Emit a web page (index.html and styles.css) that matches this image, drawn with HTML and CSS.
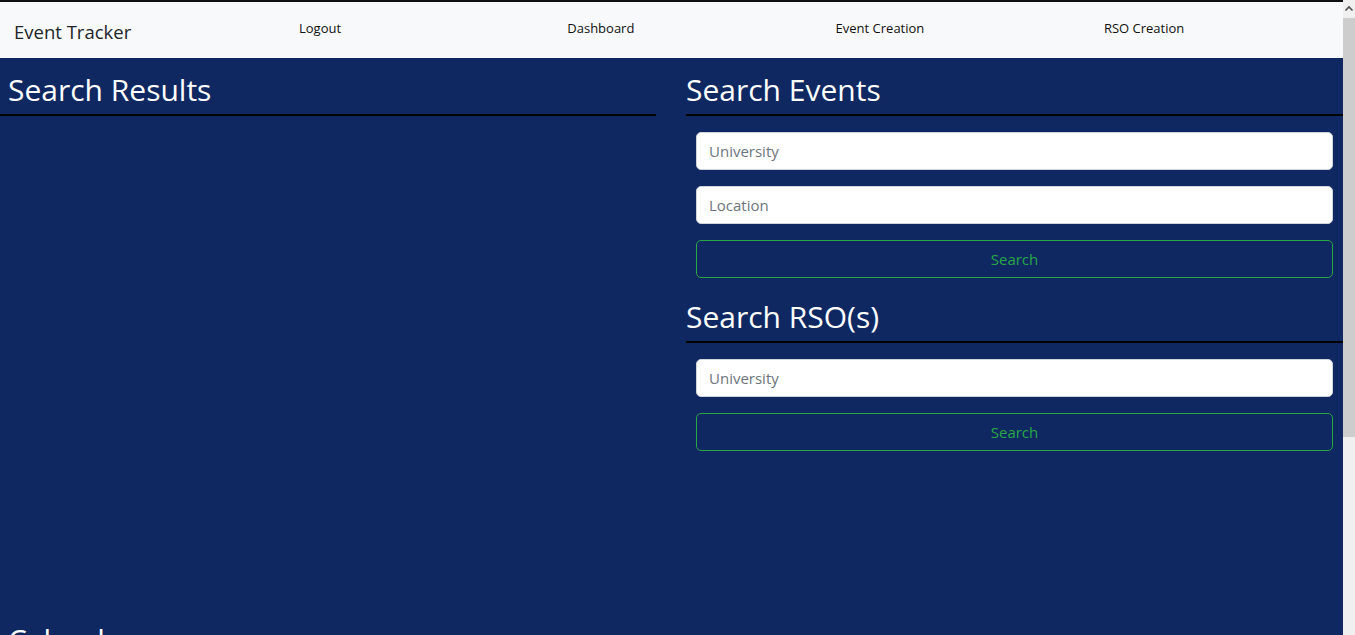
FILE: index.html
```html
<!DOCTYPE html>
<html lang="en">
<head>
<meta charset="utf-8">
<title>Event Tracker</title>
<link rel="stylesheet" href="styles.css">
</head>
<body>
<div class="viewport">
  <div class="page">
    <div class="topline"></div>
    <nav class="navbar">
      <span class="brand">Event Tracker</span>
      <ul class="nav-links">
        <li><a href="#">Logout</a></li>
        <li><a href="#">Dashboard</a></li>
        <li><a href="#">Event Creation</a></li>
        <li><a href="#">RSO Creation</a></li>
      </ul>
    </nav>
    <main class="main">
      <div class="columns">
        <section class="col-left">
          <h2 class="section-title title-left">Search Results</h2>
          <div class="results"></div>
        </section>
        <section class="col-right">
          <h2 class="section-title">Search Events</h2>
          <form class="search-form">
            <input class="form-control" type="text" placeholder="University">
            <input class="form-control" type="text" placeholder="Location">
            <button class="btn-outline" type="button">Search</button>
          </form>
          <h2 class="section-title">Search RSO(s)</h2>
          <form class="search-form">
            <input class="form-control" type="text" placeholder="University">
            <button class="btn-outline" type="button">Search</button>
          </form>
        </section>
      </div>
      <section class="calendar">
        <h2 class="section-title title-left">Calendar</h2>
        <div class="calendar-body"></div>
      </section>
    </main>
  </div>
  <div class="scrollbar">
    <div class="scroll-arrow">
      <svg width="12" height="17" viewBox="0 0 12 17"><path d="M2.5 10.5 L6 7 L9.5 10.5" fill="none" stroke="#505050" stroke-width="1.6"/></svg>
    </div>
    <div class="scroll-thumb"></div>
  </div>
</div>
</body>
</html>
```
FILE: styles.css
```css
html, body {
  margin: 0;
  padding: 0;
  height: 100%;
  overflow: hidden;
}
body {
  font-family: "Open Sans", "Noto Sans", sans-serif;
  background: #0f2862;
  color: #212529;
}
.viewport {
  display: flex;
  height: 635px;
}
.page {
  flex: 1;
  min-width: 0;
  overflow: hidden;
}
.scrollbar {
  width: 12px;
  flex: none;
  background: #f0f0f0;
  display: flex;
  flex-direction: column;
}
.scroll-arrow {
  height: 17px;
  display: flex;
}
.scroll-thumb {
  margin-top: 1px;
  height: 419px;
  background: #cdcdcd;
}
.topline {
  height: 2px;
  background: #111;
}
.navbar {
  height: 56px;
  background: #f8f9fa;
  display: flex;
  align-items: center;
}
.brand {
  flex: none;
  font-size: 18.5px;
  color: #212529;
  margin-left: 14px;
  width: 285px;
  padding-top: 2px;
}
.nav-links {
  flex: 1;
  min-width: 0;
  list-style: none;
  margin: -7px 0 0 0;
  padding: 0;
  display: grid;
  grid-template-columns: repeat(3, 268.3px) 1fr;
}
.nav-links a {
  color: #111;
  text-decoration: none;
  font-size: 13px;
}
.main {
  background: #0f2862;
}
.columns {
  display: grid;
  grid-template-columns: 656px 1fr;
  column-gap: 30px;
}
.section-title {
  margin: 0;
  font-weight: 400;
  font-size: 30px;
  line-height: 36px;
  color: #fff;
  padding-top: 14px;
  padding-bottom: 6px;
  border-bottom: 2px solid #000;
}
.title-left {
  padding-left: 8px;
}
.results {
  height: 492px;
}
.search-form {
  display: flex;
  flex-direction: column;
  gap: 16px;
  padding: 16px 10px 7px 10px;
}
.form-control {
  box-sizing: border-box;
  height: 38px;
  width: 100%;
  padding: 6px 12px;
  font-family: inherit;
  font-size: 15px;
  color: #212529;
  background: #fff;
  border: 1px solid #ced4da;
  border-radius: 5px;
  outline: none;
}
.form-control::placeholder {
  color: #6c757d;
}
.btn-outline {
  box-sizing: border-box;
  height: 38px;
  width: 100%;
  font-family: inherit;
  font-size: 15px;
  color: #28a745;
  background: transparent;
  border: 1px solid #28a745;
  border-radius: 5px;
  cursor: pointer;
}
.calendar-body {
  height: 300px;
}
```
